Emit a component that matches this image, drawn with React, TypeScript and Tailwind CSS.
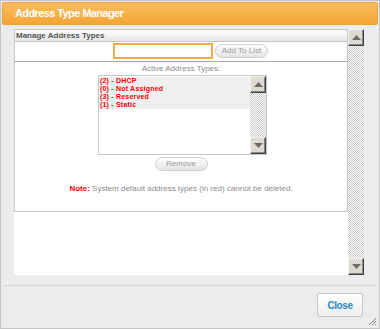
const types = ["(2) - DHCP", "(0) - Not Assigned", "(3) - Reserved", "(1) - Static"];

const sans = "font-['Liberation_Sans',Arial,sans-serif]";

function ScrollButton({ dir }: { dir: "up" | "down" }) {
  return (
    <div className="flex h-[17px] w-[16px] items-center justify-center border border-t-[#f4f3ef] border-l-[#f4f3ef] border-r-[#404040] border-b-[#404040] bg-[#dedbd3] shadow-[inset_-1px_-1px_0_#8a8780]">
      <svg width="9" height="5" viewBox="0 0 9 5">
        {dir === "up" ? (
          <polygon points="0,5 9,5 4.5,0" fill="#6b6b6b" />
        ) : (
          <polygon points="0,0 9,0 4.5,5" fill="#6b6b6b" />
        )}
      </svg>
    </div>
  );
}

function ScrollBar({ className = "" }: { className?: string }) {
  return (
    <div
      className={`flex w-[16px] flex-col justify-between bg-[image:repeating-conic-gradient(#c9c9c9_0_25%,#ffffff_0_50%)] bg-[length:2px_2px] ${className}`}
    >
      <ScrollButton dir="up" />
      <ScrollButton dir="down" />
    </div>
  );
}

function PillButton({ label, className = "" }: { label: string; className?: string }) {
  return (
    <button
      className={`flex h-[14px] items-center justify-center rounded-full border border-[#d0d0d0] bg-gradient-to-b from-[#ffffff] to-[#e4e4e4] text-[8px] text-[#9a9a9a] ${sans} ${className}`}
    >
      {label}
    </button>
  );
}

export default function App() {
  return (
    <div className="flex h-[329px] w-[380px] flex-col border border-[#c4c4c4] bg-[#ececec] p-px">
      <div
        className={`flex h-[23px] items-center rounded-[2px] border border-[#eea13a] bg-gradient-to-b from-[#f9bd60] to-[#f5a532] pl-[12px] text-[11px] font-bold tracking-[-0.6px] text-white ${sans}`}
      >
        Address Type Manager
      </div>

      <div className="ml-[12px] mt-[4px] flex h-[246px]">
        <div className="flex w-[334px] flex-col bg-white">
          <div className="flex h-[183px] flex-col border border-[#c6c6c6]">
            <div
              className={`flex h-[12px] items-center border-b border-[#c6c6c6] bg-gradient-to-b from-[#ffffff] to-[#e6e6e6] pl-[1px] text-[8px] font-bold text-[#555] ${sans}`}
            >
              Manage Address Types
            </div>

            <div className="mt-[1px] flex h-[16px] items-center pl-[98px]">
              <input className="h-[16px] w-[100px] border-2 border-[#f5ab42] bg-white outline-none" />
              <PillButton label="Add To List" className="ml-[2px] w-[53px]" />
            </div>

            <div className="mt-[2px] h-px bg-[#a8a8a8]" />

            <div className={`mt-[2px] text-center text-[8px] leading-[10px] text-[#8c8c8c] ${sans}`}>
              Active Address Types:
            </div>

            <div className="ml-[83px] mt-[1px] flex h-[80px] w-[169px] border border-[#c6c6c6] bg-white">
              <div className="flex flex-1 flex-col pt-px">
                {types.map((t) => (
                  <div
                    key={t}
                    className={`h-[8px] bg-[#efefef] pl-[1px] text-[7px] leading-[8px] font-bold tracking-[0.2px] text-[#ff0000] ${sans}`}
                  >
                    {t}
                  </div>
                ))}
              </div>
              <ScrollBar className="h-full" />
            </div>

            <div className="mt-[2px] flex justify-center">
              <PillButton label="Remove" className="w-[53px]" />
            </div>

            <div className={`mt-[13px] text-center text-[8px] leading-[10px] text-[#8c8c8c] ${sans}`}>
              <span className="font-bold text-[#ff0000]">Note:</span> System default address types (in red) cannot be deleted.
            </div>
          </div>
        </div>
        <ScrollBar />
      </div>

      <div className="mx-[2px] mt-[10px] h-px bg-[#d6d6d6]" />

      <div className="flex flex-1 items-start justify-end pr-[15px] pt-[7px]">
        <button
          className={`h-[24px] w-[46px] rounded-[2px] border border-[#c8c8c8] bg-gradient-to-b from-[#ffffff] to-[#eeeeee] text-[10px] font-bold tracking-[-0.4px] text-[#2a8ac4] ${sans}`}
        >
          Close
        </button>
      </div>

      <div className="relative">
        <svg className="absolute bottom-[1px] right-[1px]" width="9" height="9" viewBox="0 0 9 9">
          <line x1="8" y1="1" x2="1" y2="8" stroke="#888" />
          <line x1="8" y1="4" x2="4" y2="8" stroke="#888" />
          <line x1="8" y1="7" x2="7" y2="8" stroke="#888" />
        </svg>
      </div>
    </div>
  );
}
